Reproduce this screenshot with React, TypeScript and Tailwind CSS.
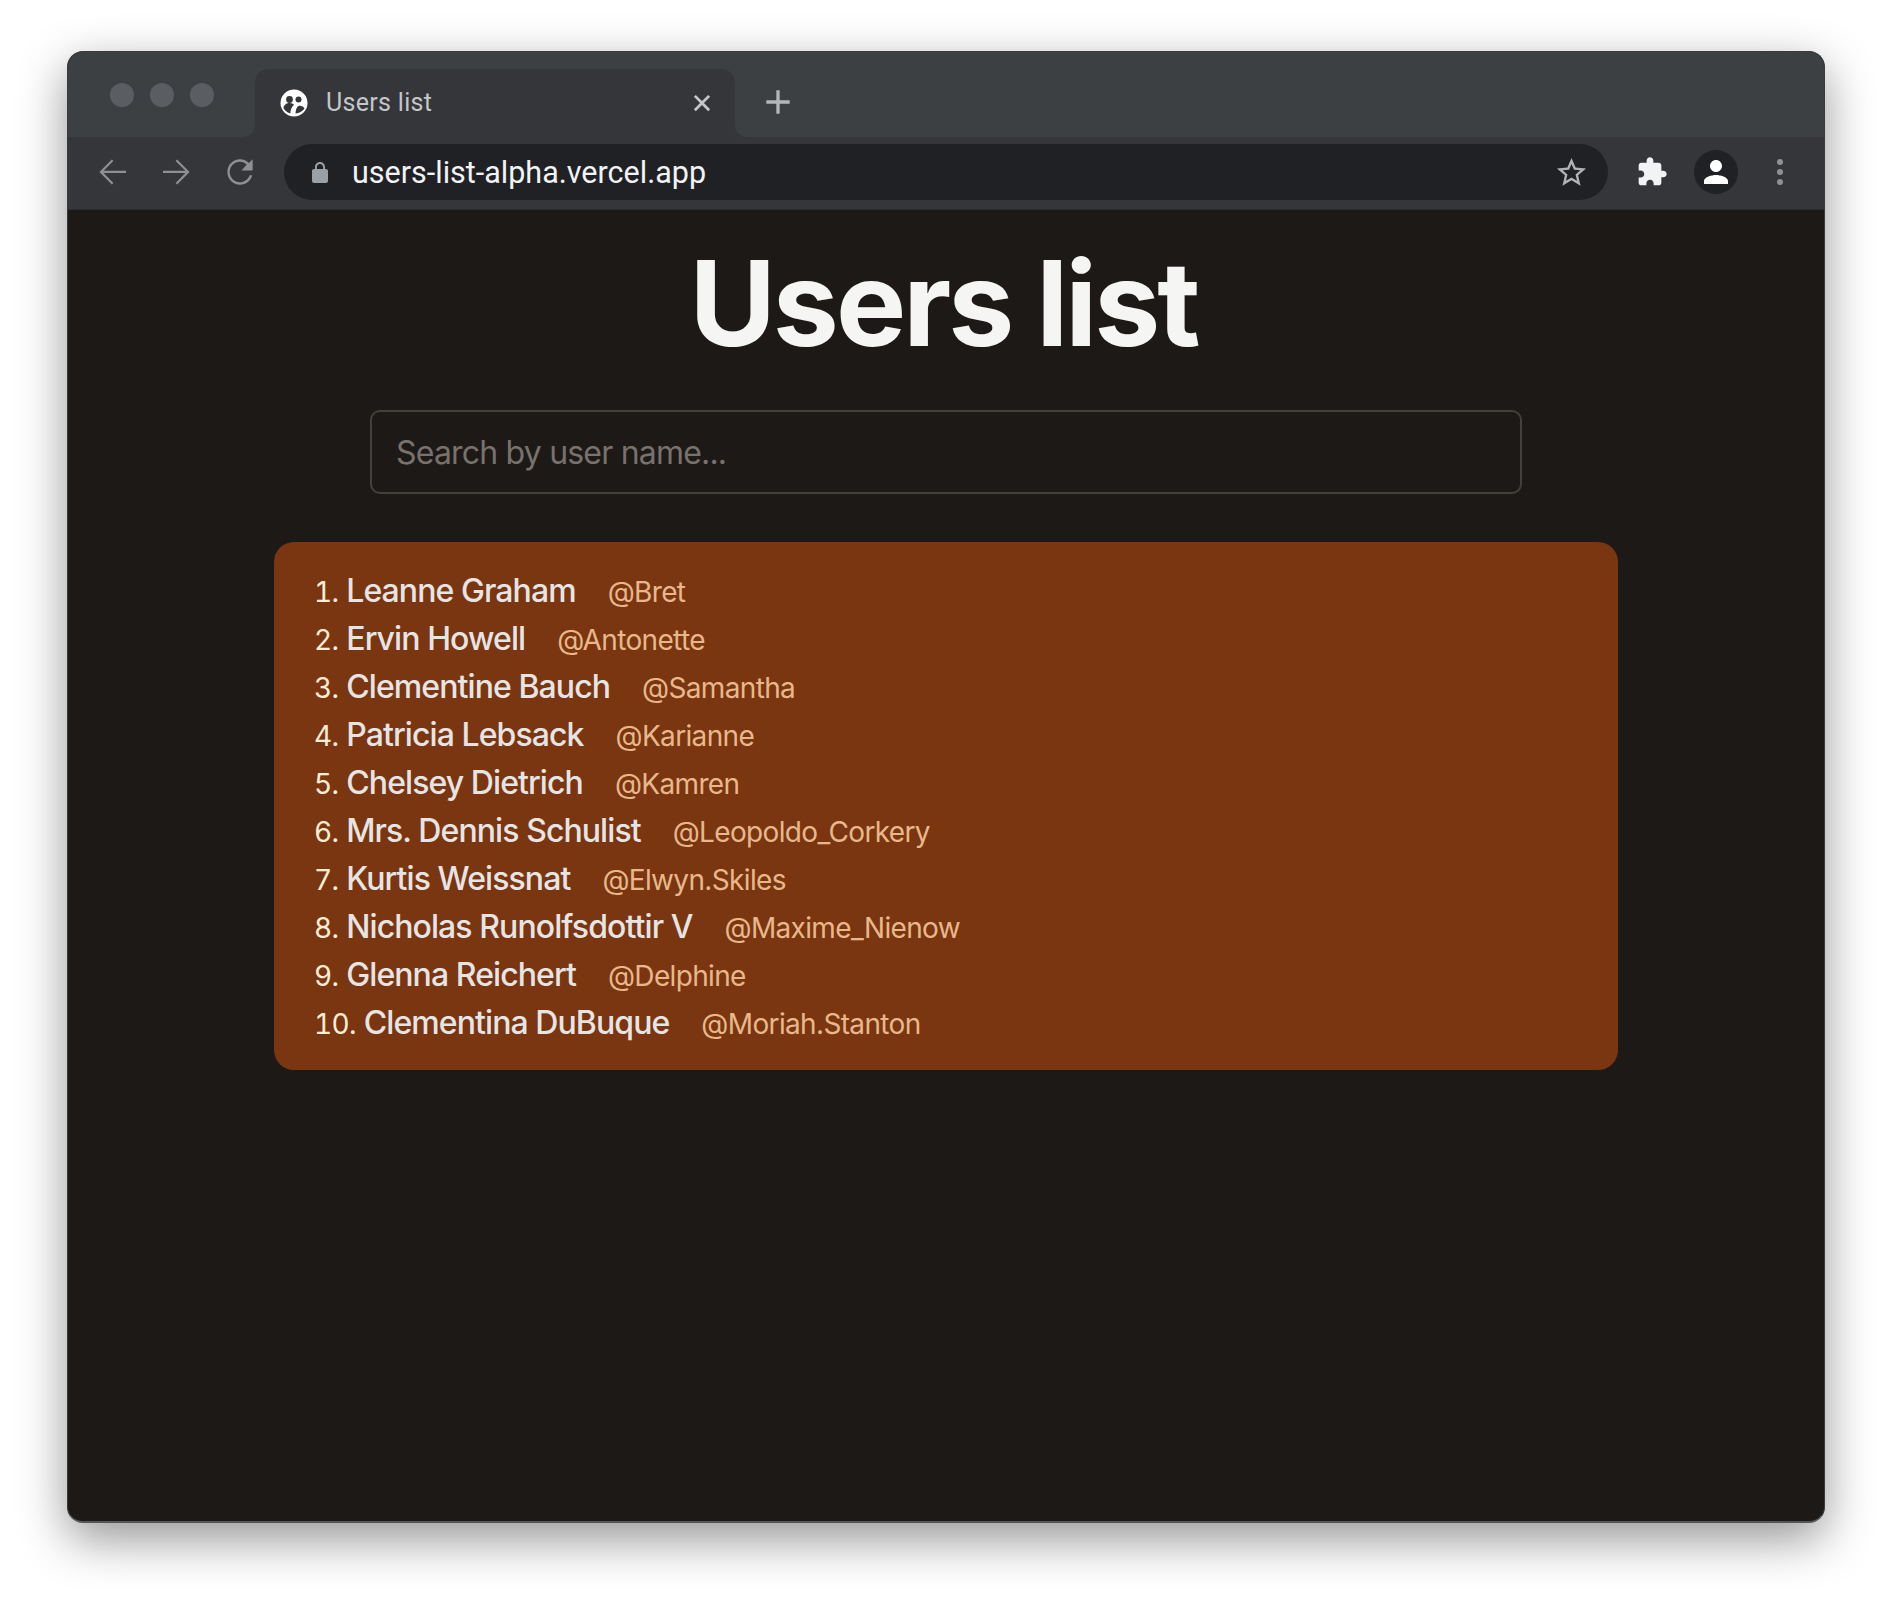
import React from 'react'

const users = [
  { name: 'Leanne Graham', handle: 'Bret' },
  { name: 'Ervin Howell', handle: 'Antonette' },
  { name: 'Clementine Bauch', handle: 'Samantha' },
  { name: 'Patricia Lebsack', handle: 'Karianne' },
  { name: 'Chelsey Dietrich', handle: 'Kamren' },
  { name: 'Mrs. Dennis Schulist', handle: 'Leopoldo_Corkery' },
  { name: 'Kurtis Weissnat', handle: 'Elwyn.Skiles' },
  { name: 'Nicholas Runolfsdottir V', handle: 'Maxime_Nienow' },
  { name: 'Glenna Reichert', handle: 'Delphine' },
  { name: 'Clementina DuBuque', handle: 'Moriah.Stanton' },
]

const Icon = ({ d, className }: { d: string; className: string }) => (
  <svg viewBox="0 0 24 24" fill="currentColor" className={className}>
    <path d={d} />
  </svg>
)

const Favicon = () => (
  <svg viewBox="0 0 28 28" className="w-[28px] h-[28px] shrink-0">
    <circle cx="14" cy="14" r="13.5" fill="#ffffff" />
    <circle cx="9.5" cy="10.5" r="3.4" fill="#35363a" />
    <circle cx="18.5" cy="10.5" r="3" fill="#35363a" />
    <path d="M3.5 19c.5-3.5 3-5 6-5s4 1 4.5 2c-2 1.5-3.5 4-3.7 8.5C7 23.5 4.5 21.500 3.500 19z" fill="#35363a" />
    <path d="M15.500 24.500c.2-3.500.8-6 3-7.500 2.500-.5 5 .5 6 2.500-1.500 2.500-5 4.700-9 5z" fill="#35363a" />
  </svg>
)

const Browser = () => (
  <>
    <div className="h-[85px] bg-[#3c4043] flex items-start">
      <div className="flex gap-[16px] pl-[42px] pt-[31px] w-[187px] shrink-0">
        <span className="w-[24px] h-[24px] rounded-full bg-[#5a5e62]" />
        <span className="w-[24px] h-[24px] rounded-full bg-[#5a5e62]" />
        <span className="w-[24px] h-[24px] rounded-full bg-[#5a5e62]" />
      </div>
      <div className="relative mt-[17px] w-[480px] h-[68px] bg-[#35363a] rounded-t-[14px] flex items-center pl-[25px] pr-[20px] pb-[1px]">
        <span className="absolute -left-[12px] bottom-0 w-[12px] h-[12px] bg-[#35363a]" />
        <span className="absolute -left-[12px] bottom-0 w-[12px] h-[12px] bg-[#3c4043] rounded-br-[12px]" />
        <span className="absolute -right-[12px] bottom-0 w-[12px] h-[12px] bg-[#35363a]" />
        <span className="absolute -right-[12px] bottom-0 w-[12px] h-[12px] bg-[#3c4043] rounded-bl-[12px]" />
        <Favicon />
        <span className="ml-[18px] flex-1 text-[25px] text-[#c4c6c9] font-['Roboto',sans-serif] tracking-[0.3px]">Users list</span>
        <Icon className="w-[26px] h-[26px] text-[#c4c6c9]" d="M19.500 6.300 13.800 12l5.700 5.700-1.800 1.800-5.700-5.700-5.700 5.700-1.800-1.800L10.200 12 4.500 6.300l1.800-1.800 5.700 5.700 5.700-5.700z" />
      </div>
      <Icon className="ml-[23px] mt-[30px] w-[40px] h-[40px] text-[#b4b6b9]" d="M13 5h-2v6H5v2h6v6h2v-6h6v-2h-6z" />
    </div>
    <div className="h-[70px] pb-[2px] bg-[#35363a] flex items-center pl-[23px] pr-[41px] border-b border-[#2c2d30] box-content">
      <Icon className="w-[42px] h-[42px] text-[#8e9093]" d="M20 11.300H7.200l5.600-5.600-.9-.9L4.800 12l7.100 7.200.9-.9-5.600-5.700H20z" />
      <Icon className="ml-[23px] w-[42px] h-[42px] text-[#8e9093]" d="M4 11.300h12.800l-5.600-5.600.9-.9 7.100 7.200-7.100 7.200-.9-.9 5.600-5.700H4z" />
      <Icon className="ml-[23px] w-[38px] h-[38px] text-[#8e9093]" d="M17.650 6.350C16.200 4.900 14.210 4 12 4c-4.420 0-7.990 3.580-7.990 8s3.570 8 7.990 8c3.730 0 6.840-2.550 7.730-6h-1.600c-.820 2.330-3.540 4.500-6.130 4.500-3.590 0-6.500-2.910-6.500-6.500S8.410 5.500 12 5.500c1.800 0 3.140.690 4.220 1.780L13 11h7V4l-2.350 2.350z" />
      <div className="ml-[25px] flex-1 h-[56px] bg-[#202124] rounded-full flex items-center pl-[24px] pr-[19px]">
        <Icon className="w-[24px] h-[24px] text-[#9aa0a6] mt-[2px]" d="M18 8h-1V6c0-2.760-2.240-5-5-5S7 3.240 7 6v2H6c-1.100 0-2 .9-2 2v10c0 1.100.9 2 2 2h12c1.100 0 2-.9 2-2V10c0-1.100-.9-2-2-2zM15.100 8H8.900V6c0-1.710 1.390-3.100 3.100-3.100s3.100 1.390 3.100 3.100v2z" />
        <span className="ml-[20px] flex-1 pt-[1px] text-[30.500px] text-[#f1f3f4] font-['Roboto',sans-serif]">users-list-alpha.vercel.app</span>
        <Icon className="w-[35px] h-[35px] text-[#b0b2b5]" d="M22 9.240l-7.190-.62L12 2 9.190 8.630 2 9.240l5.460 4.730L5.820 21 12 17.270 18.180 21l-1.630-7.030L22 9.240zM12 15.400l-3.760 2.270 1-4.280-3.320-2.880 4.380-.38L12 6.100l1.710 4.040 4.380.38-3.320 2.880 1 4.280L12 15.400z" />
      </div>
      <Icon className="ml-[28px] w-[32px] h-[32px] text-[#f1f3f4]" d="M20.500 11H19V7c0-1.100-.9-2-2-2h-4V3.500C13 2.120 11.880 1 10.500 1S8 2.120 8 3.500V5H4c-1.100 0-1.990.9-1.990 2v3.800H3.500c1.490 0 2.700 1.210 2.700 2.700s-1.210 2.700-2.700 2.700H2V20c0 1.100.9 2 2 2h3.800v-1.500c0-1.490 1.210-2.700 2.700-2.700 1.490 0 2.700 1.210 2.700 2.700V22H17c1.100 0 2-.9 2-2v-4h1.500c1.380 0 2.500-1.120 2.500-2.500S21.880 11 20.500 11z" />
      <div className="ml-[26px] w-[44px] h-[44px] rounded-full bg-[#202124] flex items-center justify-center">
        <Icon className="w-[36px] h-[36px] text-white" d="M12 12c2.210 0 4-1.790 4-4s-1.790-4-4-4-4 1.790-4 4 1.790 4 4 4zm0 2c-2.670 0-8 1.340-8 4v2h16v-2c0-2.660-5.330-4-8-4z" />
      </div>
      <div className="ml-[39px] flex flex-col gap-[4px] w-[6px]">
        <span className="w-[6px] h-[6px] rounded-full bg-[#8e9093]" />
        <span className="w-[6px] h-[6px] rounded-full bg-[#8e9093]" />
        <span className="w-[6px] h-[6px] rounded-full bg-[#8e9093]" />
      </div>
    </div>
  </>
)

export default function App() {
  return (
    <div className="w-full min-h-screen bg-white px-[67px] pt-[51px] font-['Inter',sans-serif]">
      <div className="h-[1472px] rounded-[16px] overflow-hidden bg-[#1c1917] border border-[#3a3a3a] border-b-2 border-b-[#555555] shadow-[0_16px_48px_rgba(0,0,0,0.42)] flex flex-col">
        <Browser />
        <main className="flex-1 flex flex-col items-center">
          <h1 className="mt-[33px] pr-[5px] text-[118px] leading-[120px] font-bold tracking-[-3px] text-[#f5f5f4]">Users list</h1>
          <div className="mt-[47px] w-[1152px] h-[84px] rounded-[10px] border-2 border-[#44403c] flex items-center px-[24px] pt-[2px] text-[32px] tracking-[-0.8px] text-[#78716c]">
            Search by user name...
          </div>
          <ol className="mt-[48px] w-[1344px] h-[528px] rounded-[20px] bg-[#7a3511] pl-[40px] py-[26px] list-decimal list-inside text-[28px] leading-[48px] tracking-[-0.65px] text-[#ffedd5]">
            {users.map((user) => (
              <li key={user.handle} className="h-[48px]">
                <span className="ml-[1px] text-[32px] leading-[40px] font-[450] tracking-[-0.92px] text-[#e7e5e4]">{user.name}</span>
                <span className="ml-[32px] text-[#e8b88a]">@{user.handle}</span>
              </li>
            ))}
          </ol>
        </main>
      </div>
    </div>
  )
}
